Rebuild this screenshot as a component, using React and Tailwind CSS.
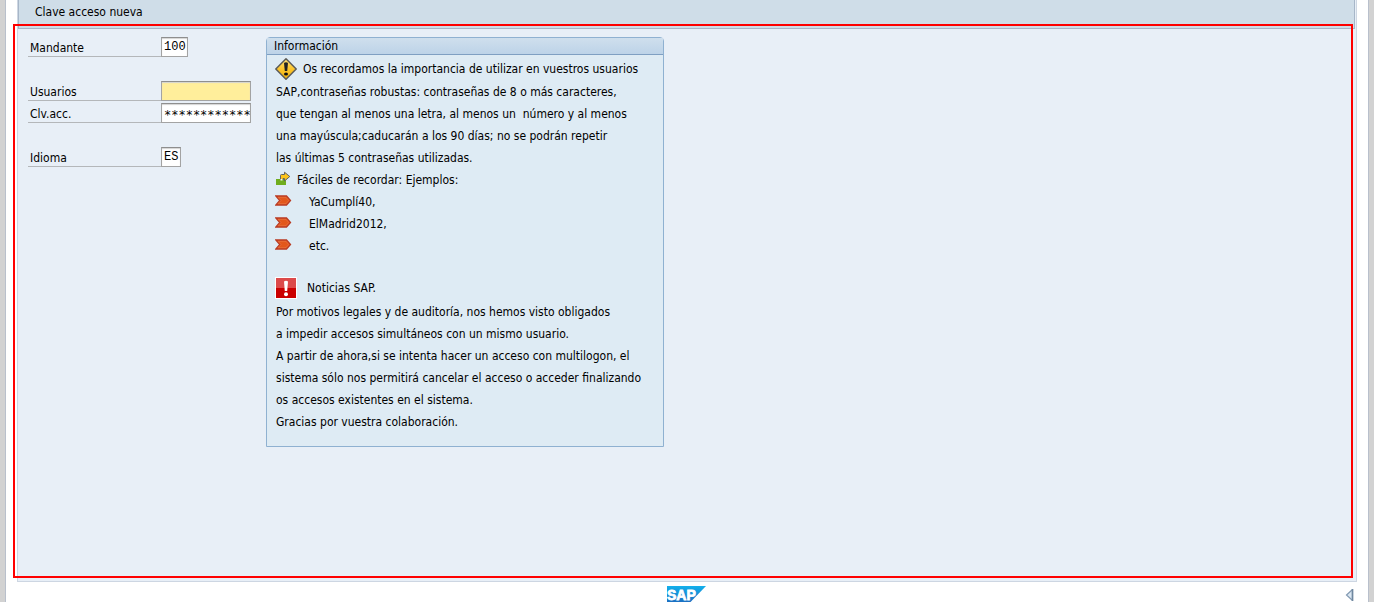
import React from "react";

const fieldBase =
  "h-5 border border-[#a3a3a3] border-t-[#8e8e8e] pl-0.5 text-xs text-black shadow-[inset_0_1px_1px_#d4d4d4] outline-none";

function FieldRow({ id, label, value, className }) {
  return (
    <div className="flex h-[22px] items-end">
      <label htmlFor={id} className="h-5 w-[133px] border-b border-[#b4b7ba] pt-px pl-0.5 leading-5">
        {label}
      </label>
      <input id={id} type="text" defaultValue={value} className={`${fieldBase} ${className}`} />
    </div>
  );
}

function WarningIcon() {
  return (
    <svg className="size-[22px] shrink-0" viewBox="0 0 22 22" aria-hidden="true">
      <defs>
        <linearGradient id="warn" x1="0" y1="0" x2="0" y2="1">
          <stop offset="0" stopColor="#ffe27a" />
          <stop offset="0.5" stopColor="#fcc52c" />
          <stop offset="1" stopColor="#f2b10a" />
        </linearGradient>
      </defs>
      <path d="M11 0.800 L21.200 11 L11 21.200 L0.800 11 Z" fill="url(#warn)" stroke="#5b5b58" strokeWidth="1.5" strokeLinejoin="round" />
      <path d="M9 5 Q11 3.6 13 5 L12.2 13 H9.8 Z" fill="#222" />
      <ellipse cx="11" cy="16" rx="2" ry="1.6" fill="#111" />
    </svg>
  );
}

function NextIcon() {
  return (
    <svg className="h-[18px] w-[15px] shrink-0" viewBox="0 0 15 18" aria-hidden="true">
      <path d="M0 8 H10 V14 H0 Z" fill="#6fad1d" />
      <path d="M4.5 8 V4.5 Q4.5 3.5 5.500 3.5 H8.5 V1.200 L13.800 5.500 L8.5 10 V7.500 H7 V8.500 H4.500 Z" fill="#fcc419" stroke="#626262" strokeWidth="1" />
      <path d="M4.500 8 H6.500 V9.500 H4.500 Z" fill="#f4f8ee" />
    </svg>
  );
}

function TagIcon() {
  return (
    <svg className="h-[14px] w-[17px] shrink-0" viewBox="0 0 17 14" aria-hidden="true">
      <path d="M0.8 1 H11.5 L15.500 5.5 L11.5 10 H0.8 L4.8 5.5 Z" fill="#e2571b" stroke="#b93a22" strokeWidth="1.3" />
      <path d="M3 2.3 H11 L13.700 5.5 L11 8.7 H3 L6 5.5 Z" fill="none" stroke="#ed8150" strokeWidth="0.5" />
    </svg>
  );
}

function AlertIcon() {
  return (
    <svg className="size-[22px] shrink-0" viewBox="0 0 22 22" aria-hidden="true">
      <rect width="22" height="22" fill="#fff" />
      <rect x="1" y="1" width="20" height="20" fill="#cb0000" />
      <rect x="1" y="1" width="20" height="10" fill="#dc4a4a" />
      <path d="M9 4.5 Q11 3 13 4.5 L12.2 14 H9.8 Z" fill="#fff" />
      <circle cx="11" cy="17.3" r="2" fill="#fff" />
    </svg>
  );
}

function SapLogo() {
  return (
    <svg className="h-4 w-10" viewBox="0 0 40 16" role="img" aria-label="SAP">
      <defs>
        <linearGradient id="sap" x1="0" y1="0" x2="0" y2="1">
          <stop offset="0" stopColor="#12b0ec" />
          <stop offset="1" stopColor="#1b6fc2" />
        </linearGradient>
      </defs>
      <path d="M0 0 H39 L23.500 16 H0 Z" fill="url(#sap)" />
      <text x="0" y="14" fill="#fff" stroke="#fff" strokeWidth="0.8" fontSize="14" fontWeight="700" fontFamily="Liberation Sans, sans-serif">
        SAP
      </text>
    </svg>
  );
}

function Line({ children, className = "h-[22px]" }) {
  return <div className={`flex items-center whitespace-pre ${className}`}>{children}</div>;
}

export default function App() {
  return (
    <div className="flex min-h-screen bg-[#d2d2d2] px-[5px] font-['DejaVu_Sans_Condensed','DejaVu_Sans',sans-serif] text-xs text-black">
      <div className="relative flex grow flex-col border-x border-[#b9c0cc] bg-white px-[11px]">
        <div className="flex grow flex-col border-x border-b border-[#cdd6e2] bg-[#e8eff7]">
          <header className="mr-px flex h-[29px] items-start border-x border-b border-[#a7b6c8] bg-[#cfdde8] pt-[3px]">
            <button type="button" className="ml-4 leading-[18px]">Clave acceso nueva</button>
          </header>
          <main className="flex grow items-start pt-1.5 pl-2.5">
            <form className="flex w-[238px] shrink-0 flex-col gap-[22px]">
              <FieldRow id="mandante" label="Mandante" value="100" className="w-[27px] bg-white font-['Liberation_Mono',monospace]" />
              <div>
                <FieldRow id="usuarios" label="Usuarios" value="" className="w-[90px] bg-[#ffee9b] font-['Liberation_Mono',monospace]" />
                <FieldRow id="clave" label="Clv.acc." value="*************" className="w-[90px] bg-white pt-1 font-['DejaVu_Sans_Mono',monospace]" />
              </div>
              <FieldRow id="idioma" label="Idioma" value="ES" className="w-5 bg-white font-['Liberation_Mono',monospace]" />
            </form>
            <section className="mt-0.5 w-[398px] rounded-t-sm border border-[#8fb1d1] bg-[#deebf4]">
              <h2 className="h-[17px] border-b border-[#7f9fc2] bg-linear-to-b from-[#cfdfed] to-[#bdd3e8] pl-[7px] leading-4">
                Información
              </h2>
              <div className="pt-[3px] pb-[13px] pl-[9px]">
                <Line className="-ml-px mb-px h-[22px] gap-1.5"><WarningIcon />Os recordamos la importancia de utilizar en vuestros usuarios</Line>
                <Line>SAP,contraseñas robustas: contraseñas de 8 o más caracteres,</Line>
                <Line>que tengan al menos una letra, al menos un  número y al menos</Line>
                <Line>una mayúscula;caducarán a los 90 días; no se podrán repetir</Line>
                <Line>las últimas 5 contraseñas utilizadas.</Line>
                <Line className="h-[22px] gap-1.5"><NextIcon />Fáciles de recordar: Ejemplos:</Line>
                <Line className="-ml-px h-[22px] gap-[17px]"><TagIcon />YaCumplí40,</Line>
                <Line className="-ml-px h-[22px] gap-[17px]"><TagIcon />ElMadrid2012,</Line>
                <Line className="-ml-px h-[22px] gap-[17px]"><TagIcon />etc.</Line>
                <Line className="h-5" />
                <Line className="-ml-px mb-0.5 h-[22px] gap-2.5"><AlertIcon />Noticias SAP.</Line>
                <Line>Por motivos legales y de auditoría, nos hemos visto obligados</Line>
                <Line>a impedir accesos simultáneos con un mismo usuario.</Line>
                <Line>A partir de ahora,si se intenta hacer un acceso con multilogon, el</Line>
                <Line>sistema sólo nos permitirá cancelar el acceso o acceder finalizando</Line>
                <Line>os accesos existentes en el sistema.</Line>
                <Line>Gracias por vuestra colaboración.</Line>
              </div>
            </section>
          </main>
        </div>
        <footer className="flex h-5 justify-center pt-1">
          <SapLogo />
          <button type="button" aria-label="Expandir" className="absolute right-[13px] bottom-px">
            <svg className="h-3 w-2.5" viewBox="0 0 10 12" aria-hidden="true">
              <path d="M7.500 0.500 L1.500 6 L7.500 11.500 Z" fill="#dce8f3" stroke="#8299b2" strokeWidth="1.2" />
              <path d="M7.500 0 V12" stroke="#6f879f" strokeWidth="1.600" />
            </svg>
          </button>
        </footer>
        <div className="pointer-events-none absolute top-6 right-[15px] bottom-6 left-[7px] border-2 border-[#ff0000]" />
      </div>
    </div>
  );
}
